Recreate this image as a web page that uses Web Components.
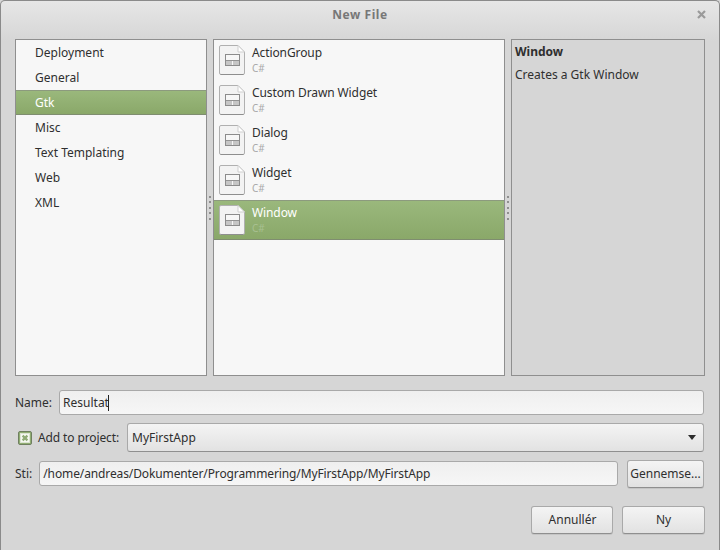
<!DOCTYPE html>
<html>
<head>
<meta charset="utf-8">
<title>New File</title>
<style>
    html, body { margin: 0; padding: 0; width: 720px; height: 550px; overflow: hidden; background: #d6d6d6; }
</style>
</head>
<body>
<new-file-dialog></new-file-dialog>
<script>
const fileIcon = `
    <svg width="28" height="30" viewBox="0 0 28 30">
        <path d="M1.5 2 Q1.5 .5 3 .5 H20 L26.5 7 V28 Q26.5 29.5 25 29.5 H3 Q1.5 29.5 1.5 28 Z" fill="#f3f3f3" stroke="#b0b0b0"/>
        <path d="M20 .5 V7 H26.5 Z" fill="#fff" stroke="#cfcfcf"/>
        <path d="M2.5 29.5 H25.5" stroke="#8e8e8e"/>
        <rect x="7.5" y="9.5" width="14" height="11" fill="#f7f7f7" stroke="#8c8c8c"/>
        <path d="M8 15.5 H21" stroke="#939393"/>
        <rect x="8" y="16" width="6" height="4" fill="#c6c6c6"/>
        <rect x="15" y="16" width="6" height="4" fill="#c6c6c6"/>
    </svg>`;

class GripDots extends HTMLElement {
    constructor() {
        super();
        this.attachShadow({ mode: 'open' });
        this.shadowRoot.innerHTML = `
            <style>
                :host {
                    display: flex;
                    flex-direction: column;
                    align-items: center;
                    justify-content: center;
                    gap: 3.5px;
                    width: 6px;
                }
                i {
                    display: block;
                    width: 2px;
                    height: 2px;
                    background: #8f8f8f;
                }
            </style>
            <i></i><i></i><i></i><i></i><i></i>
        `;
    }
}

class CategoryItem extends HTMLElement {
    constructor() {
        super();
        this.attachShadow({ mode: 'open' });
        this.shadowRoot.innerHTML = `
            <style>
                :host {
                    display: flex;
                    align-items: center;
                    height: 25px;
                    box-sizing: border-box;
                    padding-left: 19px;
                    color: #2f2f2f;
                }
                :host([selected]) {
                    color: #fff;
                    background: linear-gradient(#9ab87c, #8aa869);
                    border-top: 1px solid #8c9a7e;
                    border-bottom: 1px solid #7f8d70;
                }
            </style>
            <slot></slot>
        `;
    }
}

class TemplateItem extends HTMLElement {
    constructor() {
        super();
        this.attachShadow({ mode: 'open' });
        this.shadowRoot.innerHTML = `
            <style>
                :host {
                    display: flex;
                    align-items: center;
                    height: 40px;
                    box-sizing: border-box;
                    padding-left: 4px;
                    gap: 6px;
                    color: #2f2f2f;
                }
                :host([selected]) {
                    color: #fff;
                    background: linear-gradient(#9ab87c, #8aa869);
                    border-top: 1px solid #8c9a7e;
                    border-bottom: 1px solid #7f8d70;
                }
                svg { display: block; flex: none; }
                .text { display: flex; flex-direction: column; margin-top: -1px; }
                .name { line-height: 18px; letter-spacing: -.1px; }
                .lang { font-size: 10px; line-height: 13px; color: #a9a9a9; }
                :host([selected]) .lang { color: #a8c091; }
            </style>
            ${fileIcon}
            <div class="text">
                <span class="name"><slot></slot></span>
                <span class="lang">C#</span>
            </div>
        `;
    }
}

class ListPane extends HTMLElement {
    constructor() {
        super();
        this.attachShadow({ mode: 'open' });
        this.shadowRoot.innerHTML = `
            <style>
                :host {
                    display: block;
                    box-sizing: border-box;
                    border: 1px solid #8f8f8f;
                    background: #f7f7f7;
                    overflow: hidden;
                }
                :host([plain]) {
                    background: #d6d6d6;
                    padding: 3px 3px;
                }
            </style>
            <slot></slot>
        `;
    }
}

class TextEntry extends HTMLElement {
    constructor() {
        super();
        this.attachShadow({ mode: 'open' });
        this.shadowRoot.innerHTML = `
            <style>
                :host {
                    display: flex;
                    align-items: center;
                    box-sizing: border-box;
                    height: 25px;
                    padding: 0 3px;
                    border: 1px solid #a9a9a9;
                    border-radius: 3px;
                    background: linear-gradient(#efefef, #f6f6f6);
                    color: #2f2f2f;
                }
                .caret {
                    display: none;
                    width: 1px;
                    height: 16px;
                    background: #222;
                    margin-left: -1px;
                }
                :host([focused]) .caret { display: block; }
            </style>
            <slot></slot><span class="caret"></span>
        `;
    }
}

class PushButton extends HTMLElement {
    constructor() {
        super();
        this.attachShadow({ mode: 'open' });
        this.shadowRoot.innerHTML = `
            <style>
                :host {
                    display: flex;
                    align-items: center;
                    justify-content: center;
                    box-sizing: border-box;
                    height: 28px;
                    border: 1px solid #a9a9a9;
                    border-bottom-color: #8f8f8f;
                    border-radius: 3px;
                    background: linear-gradient(#f4f4f4, #e2e2e2);
                    box-shadow: 0 1px 0 rgba(0,0,0,.08);
                    color: #2f2f2f;
                }
            </style>
            <slot></slot>
        `;
    }
}

class ComboBox extends HTMLElement {
    constructor() {
        super();
        this.attachShadow({ mode: 'open' });
        this.shadowRoot.innerHTML = `
            <style>
                :host {
                    display: flex;
                    align-items: center;
                    justify-content: space-between;
                    box-sizing: border-box;
                    height: 29px;
                    padding: 0 7px 0 4px;
                    border: 1px solid #a9a9a9;
                    border-bottom-color: #8f8f8f;
                    border-radius: 3px;
                    background: linear-gradient(#f4f4f4, #e2e2e2);
                    color: #2f2f2f;
                }
                .arrow {
                    width: 0;
                    height: 0;
                    border-left: 4.5px solid transparent;
                    border-right: 4.5px solid transparent;
                    border-top: 5px solid #2c2c2c;
                }
            </style>
            <slot></slot><span class="arrow"></span>
        `;
    }
}

class CheckMark extends HTMLElement {
    constructor() {
        super();
        this.attachShadow({ mode: 'open' });
        this.shadowRoot.innerHTML = `
            <style>
                :host { display: block; width: 14px; height: 14px; }
                svg { display: block; }
            </style>
            <svg width="14" height="14" viewBox="0 0 14 14">
                <rect x="0.5" y="0.5" width="13" height="13" rx="1.5" fill="#90ad72" stroke="#6f7f60"/>
                <rect x="2.5" y="2.5" width="9" height="9" fill="#f6f8f2" stroke="#dbe4d1"/>
                <path d="M4.6 4.6 L9.4 9.4 M9.4 4.6 L4.6 9.4" stroke="#8fab75" stroke-width="2.2"/>
            </svg>
        `;
    }
}

class TitleBar extends HTMLElement {
    constructor() {
        super();
        this.attachShadow({ mode: 'open' });
        this.shadowRoot.innerHTML = `
            <style>
                :host {
                    display: grid;
                    grid-template-columns: 1fr auto 1fr;
                    align-items: center;
                    height: 28px;
                    color: #777;
                    font-weight: bold;
                }
                .close { grid-column: 3; justify-self: end; display: block; margin: -2px 13px 0 0; }
                .title { grid-column: 2; letter-spacing: .55px; }
            </style>
            <span class="title"><slot></slot></span>
            <svg class="close" width="9" height="9" viewBox="0 0 9 9">
                <path d="M1 1 L8 8 M8 1 L1 8" stroke="#9a9a9a" stroke-width="2.2"/>
            </svg>
        `;
    }
}

class NewFileDialog extends HTMLElement {
    constructor() {
        super();
        this.attachShadow({ mode: 'open' });
        const categories = ['Deployment', 'General', 'Gtk', 'Misc', 'Text Templating', 'Web', 'XML'];
        const templates = ['ActionGroup', 'Custom Drawn Widget', 'Dialog', 'Widget', 'Window'];
        this.shadowRoot.innerHTML = `
            <style>
                :host {
                    display: flex;
                    flex-direction: column;
                    box-sizing: border-box;
                    width: 720px;
                    height: 550px;
                    border: 1px solid #8a8a8a;
                    border-bottom: 0;
                    border-radius: 5px 5px 0 0;
                    background: linear-gradient(#e6e6e6, #d6d6d6 40px);
                    font: 12px/16px "Noto Sans", sans-serif;
                }
                main {
                    flex: 1;
                    display: flex;
                    flex-direction: column;
                    padding: 10px 14px 14px;
                }
                .panes {
                    display: grid;
                    grid-template-columns: 192px 6px 292px 6px 194px;
                    height: 337px;
                }
                .heading { font-weight: bold; color: #2f2f2f; line-height: 17px; }
                .desc { margin-top: 7px; color: #2f2f2f; }
                .form {
                    display: grid;
                    grid-template-columns: auto 1fr;
                    margin-top: 14px;
                }
                .row { display: flex; align-items: center; color: #2f2f2f; }
                .name { height: 25px; gap: 7px; margin-right: 1px; }
                .project { height: 29px; margin-top: 8px; padding-left: 3px; margin-right: 1px; }
                .project check-mark { margin-right: 6px; }
                .project span { letter-spacing: -.12px; }
                .project combo-box { margin-left: 8px; }
                .path { height: 29px; margin-top: 7px; gap: 7px; margin-right: 1px; }
                .path text-entry { letter-spacing: -.115px; }
                .form > .row { grid-column: 1 / 3; }
                .row > text-entry, .row > combo-box { flex: 1; }
                .path push-button { width: 77px; margin-left: 2px; }
                footer {
                    display: flex;
                    justify-content: flex-end;
                    gap: 9px;
                    margin-top: 18px;
                }
                footer push-button { width: 83px; }
                footer push-button:first-child { width: 82px; padding-left: 1px; }
            </style>
            <title-bar>New File</title-bar>
            <main>
                <div class="panes">
                    <list-pane>
                        ${categories.map(c => `<category-item ${c === 'Gtk' ? 'selected' : ''}>${c}</category-item>`).join('')}
                    </list-pane>
                    <grip-dots></grip-dots>
                    <list-pane>
                        ${templates.map(t => `<template-item ${t === 'Window' ? 'selected' : ''}>${t}</template-item>`).join('')}
                    </list-pane>
                    <grip-dots></grip-dots>
                    <list-pane plain>
                        <div class="heading">Window</div>
                        <div class="desc">Creates a Gtk Window</div>
                    </list-pane>
                </div>
                <div class="form">
                    <div class="row name"><span>Name:</span><text-entry focused>Resultat</text-entry></div>
                    <div class="row project"><check-mark></check-mark><span>Add to project:</span><combo-box>MyFirstApp</combo-box></div>
                    <div class="row path"><span>Sti:</span><text-entry>/home/andreas/Dokumenter/Programmering/MyFirstApp/MyFirstApp</text-entry><push-button>Gennemse...</push-button></div>
                </div>
                <footer>
                    <push-button>Annullér</push-button>
                    <push-button>Ny</push-button>
                </footer>
            </main>
        `;
    }
}

customElements.define('grip-dots', GripDots);
customElements.define('category-item', CategoryItem);
customElements.define('template-item', TemplateItem);
customElements.define('list-pane', ListPane);
customElements.define('text-entry', TextEntry);
customElements.define('push-button', PushButton);
customElements.define('combo-box', ComboBox);
customElements.define('check-mark', CheckMark);
customElements.define('title-bar', TitleBar);
customElements.define('new-file-dialog', NewFileDialog);
</script>
</body>
</html>
